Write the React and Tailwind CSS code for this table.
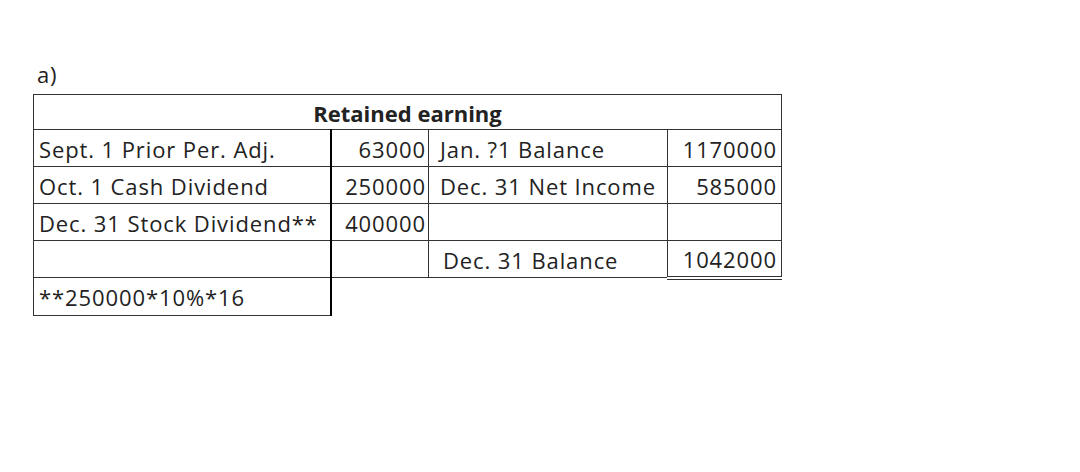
import React from "react";

const cell = "h-[37px] px-[5px] pt-[1px] align-middle whitespace-nowrap";
const line = "border border-[#333]";
const thick = "border border-[#333] border-r-2 border-r-black";

const App = () => {
  return (
    <div className="w-[1080px] h-[472px] bg-white text-[#222] font-['Open_Sans',sans-serif] text-[22px] leading-none tracking-[0.9px]">
      <div className="pt-[63px] pl-[37px] h-[94px]">a)</div>
      <table className="ml-[33px] border-collapse table-fixed w-[748px]">
        <colgroup>
          <col className="w-[297px]" />
          <col className="w-[98px]" />
          <col className="w-[239px]" />
          <col className="w-[114px]" />
        </colgroup>
        <tbody>
          <tr>
            <td colSpan={4} className={`h-[35px] ${line} text-center font-bold tracking-normal pt-[1px]`}>
              Retained earning
            </td>
          </tr>
          <tr>
            <td className={`${cell} ${thick}`}>Sept. 1 Prior Per. Adj.</td>
            <td className={`${cell} ${line} text-right pr-[2px]`}>63000</td>
            <td className={`${cell} ${line} pl-[11px]`}>Jan. ?1 Balance</td>
            <td className={`${cell} ${line} text-right pr-[4px]`}>1170000</td>
          </tr>
          <tr>
            <td className={`${cell} ${thick}`}>Oct. 1 Cash Dividend</td>
            <td className={`${cell} ${line} text-right pr-[2px]`}>250000</td>
            <td className={`${cell} ${line} pl-[11px]`}>Dec. 31 Net Income</td>
            <td className={`${cell} ${line} text-right pr-[4px]`}>585000</td>
          </tr>
          <tr>
            <td className={`${cell} ${thick}`}>Dec. 31 Stock Dividend**</td>
            <td className={`${cell} ${line} text-right pr-[2px]`}>400000</td>
            <td className={`${cell} ${line}`}></td>
            <td className={`${cell} ${line}`}></td>
          </tr>
          <tr>
            <td className={`${cell} ${thick}`}></td>
            <td className={`${cell} ${line}`}></td>
            <td className={`${cell} ${line} pl-[14px]`}>Dec. 31 Balance</td>
            <td className={`${cell} ${line} border-b-4 border-b-[#333] border-double text-right pr-[4px]`}>1042000</td>
          </tr>
          <tr>
            <td className={`${cell} h-[38px] ${thick}`}>**250000*10%*16</td>
            <td></td>
            <td></td>
            <td></td>
          </tr>
        </tbody>
      </table>
    </div>
  );
};

export default App;
